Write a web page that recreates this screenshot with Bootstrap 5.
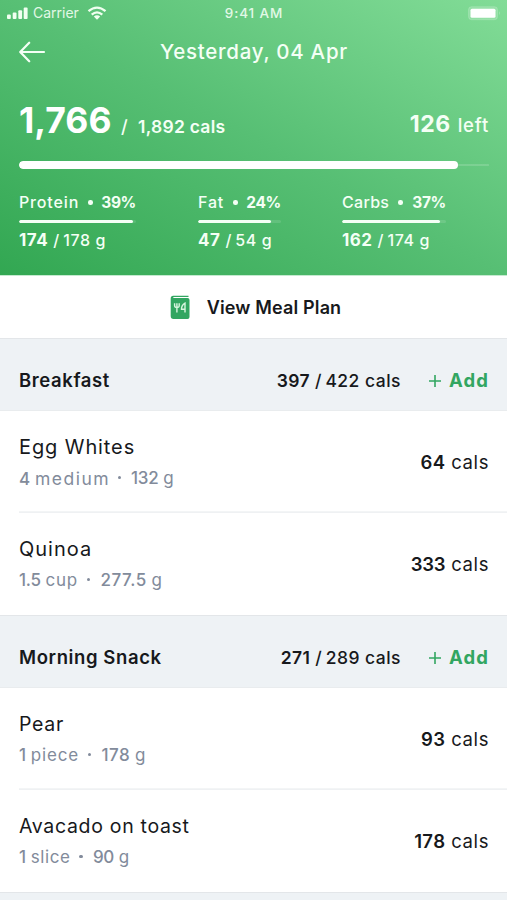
<!DOCTYPE html>
<html lang="en">
<head>
<meta charset="utf-8">
<meta name="viewport" content="width=device-width, initial-scale=1">
<title>Meal diary</title>
<link href="https://cdn.jsdelivr.net/npm/bootstrap@5.3.0/dist/css/bootstrap.min.css" rel="stylesheet">
<style>
body{font-family:Inter,"Open Sans",sans-serif;color:#17191c;background:#fff;line-height:1;font-weight:500}
.side{padding-left:19px;padding-right:18px}
.hero{height:275px;background:linear-gradient(to top right,#32a752 0%,#57bf74 50%,#82dc97 100%);color:#f4fff5}
.status{height:26px;padding:0 6px 0 7px;font-size:14px;color:#e2f8e6}
.status .third{flex:1 1 0}
.carrier{font-weight:400;margin-left:5px}
.clock{font-size:13.5px;font-weight:500;letter-spacing:.9px;padding-top:1px}
.topbar{height:52px}
.topbar .end{width:27px}
.title{font-size:20.5px;font-weight:500;letter-spacing:.72px;padding-top:1px}
.totals{height:83px}
.totals>div{height:83px;line-height:85px}
.big{font-size:35.5px;font-weight:700;letter-spacing:0;width:102px;color:#fff}
.slash{font-size:18px;width:17px;font-weight:500}
.goal{font-size:17.5px;font-weight:600;letter-spacing:.25px}
.remaining{padding-top:4px}
.left-n{font-size:23px;font-weight:700;letter-spacing:.5px;margin-right:7px}
.left-t{font-size:18.5px;font-weight:500;letter-spacing:.8px}
.progress.total{height:8px;background:linear-gradient(#ffffff26,#ffffff26) center/100% 2px no-repeat;border-radius:4px}
.progress.total .progress-bar{background:#fff;border-radius:4px}
.macros{padding-top:24px}
.macro{height:65px}
.m1{width:117px;margin-right:62px}
.m2{width:83px;margin-right:61px}
.m3{width:104px}
.label-row{height:19px;line-height:19px;font-size:15.5px;white-space:nowrap}
.label-row .nm{font-size:16px;font-weight:500;letter-spacing:.85px;width:69px}
.m2 .nm{width:35px!important}
.m3 .nm{width:56px!important;letter-spacing:.3px!important}
.label-row .pc{letter-spacing:-.35px;font-weight:700;margin-left:auto}
.pip{width:4.5px;height:4.5px;border-radius:50%;background:currentColor}
.progress.mini{height:3px;margin:7.5px 0 8px;background:#ffffff1f;border-radius:2px}
.progress.mini .progress-bar{background:#f4fff5;border-radius:2px}
.value-row{height:19px;line-height:19px;white-space:nowrap}
.value-row b{font-size:17px;font-weight:700;letter-spacing:.5px}
.value-row .sl{font-size:16px;margin:0 4px 0 5px}
.value-row .gr{font-size:16px;letter-spacing:.6px}
.plan{height:63px;padding-left:4px;font-size:18px;font-weight:600;letter-spacing:.15px;border-top:1px solid #c5ead0;color:#17191c}
.plan svg{margin-right:17px}
.plan span{padding-top:1px}
.meal-head{height:73px;padding-top:12px;background:#eef2f5;border-top:1px solid #e3e6e9;border-bottom:1px solid #e9ecee;font-size:17.5px}
.meal-head.next{height:9px;padding:0;border-bottom:0}
.meal-name{font-size:18.5px;font-weight:600;letter-spacing:.6px}
.sum{font-weight:500;white-space:nowrap}
.sum b{font-weight:600;letter-spacing:.35px}
.sum .sl{margin:0 4px 0 5px}
.sum .of{letter-spacing:.48px}
.add{color:#32a661;font-size:18.5px;font-weight:700;width:60px;margin-left:28px;letter-spacing:1.1px}
.food{height:102px;padding-right:18px;margin-left:19px}
.food+.food{box-shadow:0 -1px #eff1f3,0 -2px #f3f5f6}
.food .nm{height:31px;line-height:31px;font-weight:400;color:#17191c;font-size:19.5px}
.food .sub{height:30px;line-height:31px;font-size:17px;color:#828b9b;font-weight:400;white-space:nowrap}
.food .sub b{font-weight:500}
.food .pip{width:3.5px;height:3.5px;align-self:center;margin:0 10px 0 9px}
.cals{font-size:18.5px;font-weight:400;letter-spacing:.6px}
.cals b{font-weight:600;letter-spacing:.4px}
.food .w-1{font-size:20px;letter-spacing:.9px}.food .w-2{font-size:20px;letter-spacing:1px}.w-3{letter-spacing:.7px}.w-4{letter-spacing:.68px}
.s-0{letter-spacing:-.2px!important}.s-1{letter-spacing:.8px}.s-2{font-size:17.5px;letter-spacing:1.5px;margin-right:-1.5px}.s-5{letter-spacing:.55px}.s-n{letter-spacing:-.3px}
</style>
<script src="https://cdn.jsdelivr.net/npm/bootstrap@5.3.0/dist/js/bootstrap.bundle.min.js"></script>
</head>
<body>
<header class="hero">
  <div class="status d-flex align-items-center">
    <div class="third d-flex align-items-center">
      <svg width="21" height="13" viewBox="0 0 21 13" fill="#f0fff0"><rect y="7.500" width="3.800" height="4.500" rx="1"/><rect x="5.700" y="5.500" width="3.800" height="6.500" rx="1"/><rect x="11.300" y="3.200" width="3.800" height="8.800" rx="1"/><rect x="16.700" y="0.500" width="3.900" height="11.500" rx="1"/></svg>
      <span class="carrier">Carrier</span>
      <svg class="ms-2" width="20" height="14" viewBox="0 0 20 14" fill="none" stroke="#f0fff0" stroke-width="2.300"><path d="M1.500 5.200Q10-2 18.500 5.200M4.700 8.700Q10 4 15.300 8.700"/><path d="M6.800 10.500Q10 8 13.200 10.500L10 13.700Z" fill="#f0fff0" stroke="none"/></svg>
    </div>
    <span class="clock">9:41 AM</span>
    <div class="third d-flex justify-content-end">
      <svg width="33" height="15" viewBox="0 0 33 15"><rect x=".5" y=".7" width="29" height="13" rx="3" fill="#ffffff2e" stroke="#ffffff2a"/><rect x="2.500" y="2.800" width="25" height="9" rx="1.500" fill="#fff"/><path d="M31 5v4.500q1.500-2.200 0-4.500" fill="#ffffff60"/></svg>
    </div>
  </div>
  <div class="topbar side d-flex align-items-center justify-content-between">
    <svg class="end" width="27" height="22" viewBox="0 0 27 22" fill="none" stroke="#f4fff5" stroke-width="2.200" stroke-linecap="round" stroke-linejoin="round"><path d="M25 11H1.200M10.200 1.700L1.200 11l9 9.300"/></svg>
    <span class="title">Yesterday, 04 Apr</span>
    <span class="end"></span>
  </div>
  <div class="totals side d-flex justify-content-between">
    <div class="d-flex align-items-baseline"><span class="big">1,766</span><span class="slash">/</span><span class="goal">1,892 cals</span></div>
    <div class="remaining d-flex align-items-baseline"><span class="left-n">126</span><span class="left-t">left</span></div>
  </div>
  <div class="side"><div class="progress total"><div class="progress-bar" style="width:93.3%"></div></div></div>
  <div class="macros side d-flex">
    <div class="macro m1">
      <div class="label-row d-flex align-items-center"><span class="nm">Protein</span><span class="pip"></span><span class="pc">39%</span></div>
      <div class="progress mini"><div class="progress-bar" style="width:97.8%"></div></div>
      <div class="value-row"><b>174</b><span class="sl">/</span><span class="gr">178 g</span></div>
    </div>
    <div class="macro m2">
      <div class="label-row d-flex align-items-center"><span class="nm">Fat</span><span class="pip"></span><span class="pc">24%</span></div>
      <div class="progress mini"><div class="progress-bar" style="width:88%"></div></div>
      <div class="value-row"><b>47</b><span class="sl">/</span><span class="gr">54 g</span></div>
    </div>
    <div class="macro m3">
      <div class="label-row d-flex align-items-center"><span class="nm">Carbs</span><span class="pip"></span><span class="pc">37%</span></div>
      <div class="progress mini"><div class="progress-bar" style="width:94%"></div></div>
      <div class="value-row"><b>162</b><span class="sl">/</span><span class="gr">174 g</span></div>
    </div>
  </div>
</header>
<a class="plan d-flex align-items-center justify-content-center text-decoration-none" href="#">
  <svg width="20" height="25" viewBox="0 0 20 25"><path d="M3.200.700H18.500V2H4.500Q3 2 3 3H17.500Q19.500 3 19.500 5V22Q19.500 24 17.500 24H3.500Q.700 24 .700 21V3.500Q.700.700 3.200.700Z" fill="#32a661"/><path d="M4.600 8.200V10.500Q4.600 12.600 6.900 12.600T9.200 10.500V8.200M6.900 8.200V17.500M15 17.500V8.200Q11.500 10 11.500 14.200H15" fill="none" stroke="#d8f5df" stroke-width="1.400"/></svg>
  <span>View Meal Plan</span>
</a>
<section>
  <div class="meal-head side d-flex align-items-center">
    <span class="meal-name me-auto">Breakfast</span>
    <span class="sum"><b>397</b><span class="sl">/</span><span class="of">422 cals</span></span>
    <a class="add d-flex align-items-center justify-content-between text-decoration-none" href="#"><svg width="12" height="12" viewBox="0 0 12 12" stroke="#32a661" stroke-width="1.600"><path d="M0 6H12M6 0V12"/></svg><span>Add</span></a>
  </div>
  <div class="food d-flex align-items-center justify-content-between">
    <div><div class="nm w-1">Egg Whites</div><div class="sub d-flex"><span><b>4</b> <span class="s-2">medium</span></span><i class="pip"></i><span><b class="s-n">132</b> g</span></div></div>
    <div class="cals"><b>64</b> cals</div>
  </div>
  <div class="food d-flex align-items-center justify-content-between">
    <div><div class="nm w-2">Quinoa</div><div class="sub d-flex"><span><b class="s-n">1.5</b> <span class="s-1">cup</span></span><i class="pip"></i><span><b class="s-5">277.5</b> g</span></div></div>
    <div class="cals"><b class="s-0">333</b> cals</div>
  </div>
</section>
<section>
  <div class="meal-head side d-flex align-items-center">
    <span class="meal-name me-auto">Morning Snack</span>
    <span class="sum"><b>271</b><span class="sl">/</span><span class="of">289 cals</span></span>
    <a class="add d-flex align-items-center justify-content-between text-decoration-none" href="#"><svg width="12" height="12" viewBox="0 0 12 12" stroke="#32a661" stroke-width="1.600"><path d="M0 6H12M6 0V12"/></svg><span>Add</span></a>
  </div>
  <div class="food d-flex align-items-center justify-content-between">
    <div><div class="nm w-3">Pear</div><div class="sub d-flex"><span><b>1</b> <span class="s-1">piece</span></span><i class="pip"></i><span><b class="s-5">178</b> g</span></div></div>
    <div class="cals"><b>93</b> cals</div>
  </div>
  <div class="food d-flex align-items-center justify-content-between">
    <div><div class="nm w-4">Avacado on toast</div><div class="sub d-flex"><span><b>1</b> <span class="s-5">slice</span></span><i class="pip"></i><span><b class="s-n">90</b> g</span></div></div>
    <div class="cals"><b>178</b> cals</div>
  </div>
</section>
<section><div class="meal-head next"></div></section>
</body>
</html>
